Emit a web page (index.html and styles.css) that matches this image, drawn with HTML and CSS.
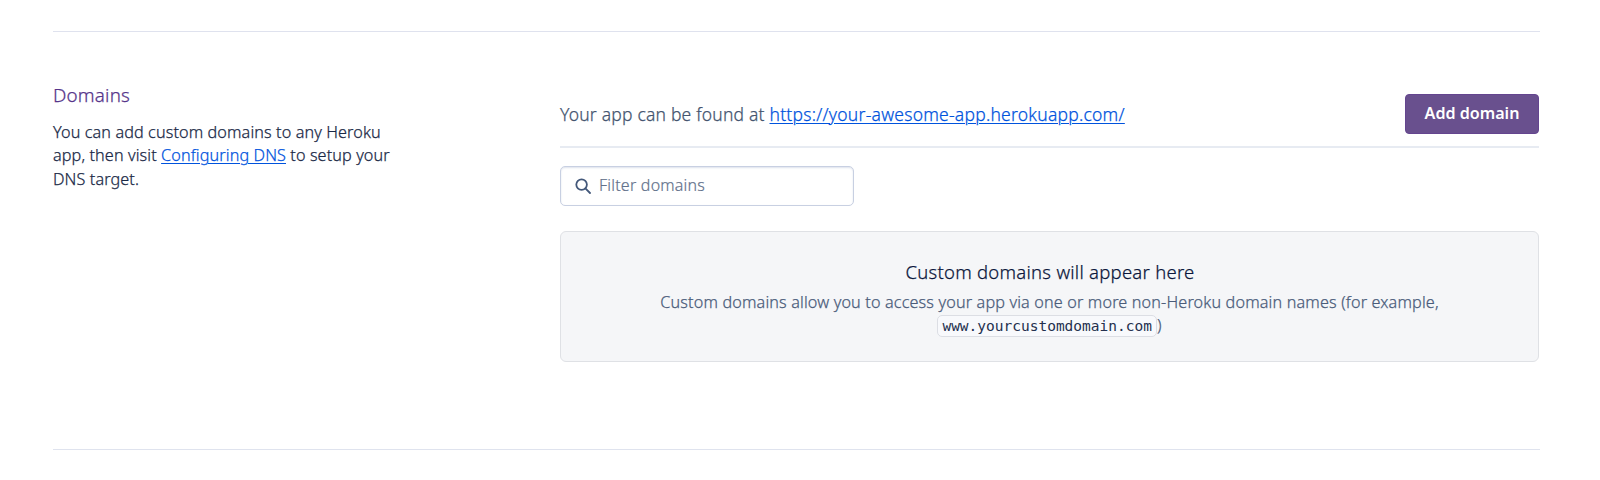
FILE: index.html
```html
<!DOCTYPE html>
<html lang="en">
<head>
<meta charset="utf-8">
<title>Domains</title>
<link rel="stylesheet" href="styles.css">
</head>
<body>
<section class="section">
  <div class="intro">
    <h2 class="intro-title">Domains</h2>
    <p class="intro-text">You can add custom domains to any Heroku<br>app, then visit <a href="#">Configuring DNS</a> to setup your<br>DNS target.</p>
  </div>
  <div class="content">
    <div class="toolbar">
      <p class="app-url">Your app can be found at <a href="#">https://your-awesome-app.herokuapp.com/</a></p>
      <button class="button">Add domain</button>
    </div>
    <label class="filter">
      <svg class="filter-icon" viewBox="0 0 16 16" aria-hidden="true"><circle cx="6.6" cy="6.6" r="5.3"/><path d="M10.4 10.4 15 15"/></svg>
      <span class="filter-label">Filter domains</span>
    </label>
    <div class="empty">
      <h3 class="empty-title">Custom domains will appear here</h3>
      <p class="empty-text">Custom domains allow you to access your app via one or more non-Heroku domain names (for example,<br><code>www.yourcustomdomain.com</code>)</p>
    </div>
  </div>
</section>
</body>
</html>
```

FILE: styles.css
```css
* { box-sizing: border-box; }
body { margin: 0; background: #fff; font-family: "Noto Sans", sans-serif; color: #1a2946; }
h2, h3, p { margin: 0; font-weight: 300; white-space: nowrap; -webkit-text-stroke-width: 0.25px; }
a { color: #0053dd; text-decoration-thickness: 1px; text-underline-offset: 2px; }
.section {
  display: flex;
  justify-content: space-between;
  height: 419px;
  margin: 31px 60px 0 53px;
  border-top: 1px solid #dfe2ee;
  border-bottom: 1px solid #dfe3ee;
}
.intro { width: 380px; padding-top: 49px; }
.intro-title { font-size: 18.8px; line-height: 28px; letter-spacing: 0.2px; color: #56358a; }
.intro-text { margin-top: 12px; font-size: 16.2px; line-height: 23.4px; letter-spacing: 0.11px; }
.content { width: 979px; margin-right: 1px; padding-top: 62px; }
.toolbar { display: flex; justify-content: space-between; height: 54px; border-bottom: 2px solid #e7ebf2; }
.app-url { padding-top: 8px; font-size: 17.5px; line-height: 24px; letter-spacing: 0.2px; color: #44556f; }
.app-url a { letter-spacing: 0.24px; }
.button {
  width: 134px; height: 40px; padding: 0 0 2px;
  border: 1px solid #64458f; border-radius: 4px;
  background: #69508e; color: #fff;
  font: 600 16.1px/24px "Noto Sans", sans-serif;
}
.filter {
  display: flex; align-items: center;
  width: 294px; height: 40px; margin-top: 18px; padding-left: 14px;
  border: 1px solid #c8d0e2; border-radius: 5px;
  box-shadow: inset 0 1px 2px #dde2ec;
  font-size: 16px; font-weight: 300; letter-spacing: 0.22px; color: #62718b;
  -webkit-text-stroke-width: 0.2px;
}
.filter-icon { width: 16px; height: 16px; margin-right: 8px; fill: none; stroke: #43587a; stroke-width: 1.8; stroke-linecap: round; }
.filter-label { padding-bottom: 2px; }
.empty {
  height: 131px; margin-top: 25px; padding-top: 26px;
  border: 1px solid #dfe1e5; border-radius: 6px;
  background: #f5f6f8; text-align: center;
}
.empty-title { padding-left: 1px; font-size: 18.5px; line-height: 28px; letter-spacing: 0.26px; color: #0b173c; }
.empty-text { margin-top: 5px; font-size: 16.2px; line-height: 23px; letter-spacing: 0.15px; color: #4a5c7a; }
.empty-text code {
  padding: 2px 4px; border: 1px solid #dcdee4; border-radius: 5px;
  background: #f8f9fc; color: #24304e;
  font: 14.5px "DejaVu Sans Mono", monospace; letter-spacing: 0;
  -webkit-text-stroke-width: 0;
}
```
